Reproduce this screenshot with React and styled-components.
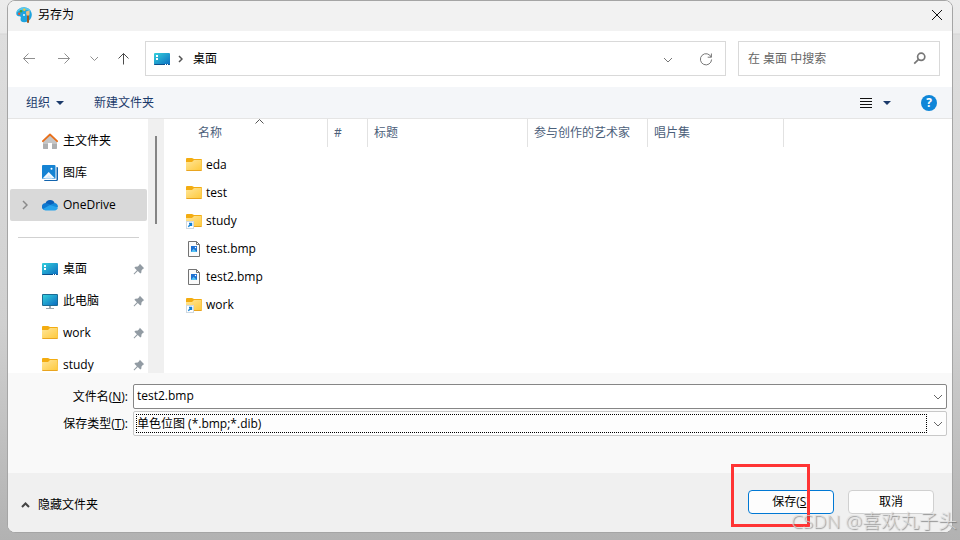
// App.jsx
import { useState } from "react";
import styled, { createGlobalStyle } from "styled-components";

const places = [
  { name: "主文件夹", icon: HomeIcon },
  { name: "图库", icon: GalleryIcon },
  { name: "OneDrive", icon: CloudIcon, expandable: true },
];

const pinned = [
  { name: "桌面", icon: DesktopIcon },
  { name: "此电脑", icon: ComputerIcon },
  { name: "work", icon: FolderIcon },
  { name: "study", icon: FolderIcon },
];

const columns = [
  { name: "名称", width: 164, sorted: true },
  { name: "#", width: 40 },
  { name: "标题", width: 160 },
  { name: "参与创作的艺术家", width: 120 },
  { name: "唱片集", width: 136 },
];

const files = [
  { name: "eda", icon: FolderIcon },
  { name: "test", icon: FolderIcon },
  { name: "study", icon: FolderLinkIcon },
  { name: "test.bmp", icon: BitmapIcon },
  { name: "test2.bmp", icon: BitmapIcon },
  { name: "work", icon: FolderLinkIcon },
];

export default function App() {
  const [fileName, setFileName] = useState("test2.bmp");
  const [place, setPlace] = useState("OneDrive");

  return (
    <Desktop>
      <GlobalStyle />
      <Dialog role="dialog" aria-labelledby="dialog-title">
        <TitleBar>
          <PaintIcon />
          <Title id="dialog-title">另存为</Title>
          <CloseButton aria-label="关闭">
            <Stroke width="12" height="12" $color="#111">
              <path d="M1 1L11 11M11 1L1 11" />
            </Stroke>
          </CloseButton>
        </TitleBar>

        <NavBar>
          <History>
            <IconButton aria-label="后退">
              <Stroke width="14" height="14" $color="#8f8f8f">
                <path d="M13 6.5H1.5M6.5 1.5L1.5 6.5L6.5 11.5" />
              </Stroke>
            </IconButton>
            <IconButton aria-label="前进">
              <Stroke width="14" height="14" $color="#8f8f8f">
                <path d="M2 6.5H13.5M8.5 1.5L13.5 6.5L8.5 11.5" />
              </Stroke>
            </IconButton>
            <IconButton aria-label="最近的位置">
              <Stroke width="8" height="14" $color="#8f8f8f">
                <path d="M0.5 4.5L4.5 8.5L8 5" />
              </Stroke>
            </IconButton>
            <IconButton aria-label="上移">
              <Stroke width="14" height="14" $color="#4c4c4c">
                <path d="M5.5 12.5V1.5M0.5 6.5L5.5 1.5L10.5 6.5" />
              </Stroke>
            </IconButton>
          </History>
          <AddressBar>
            <DesktopIcon />
            <Stroke width="5" height="8" $color="#555" $weight={1.5}>
              <path d="M1 1L4 4L1 7" />
            </Stroke>
            <Crumb>桌面</Crumb>
            <AddressTools>
              <IconButton aria-label="以前的位置">
                <Stroke width="10" height="8" $color="#777">
                  <path d="M1 3L5 7L9 3" />
                </Stroke>
              </IconButton>
              <IconButton aria-label="刷新">
                <Stroke width="14" height="14" $color="#777">
                  <path d="M12.2 5.2A5.6 5.6 0 1 0 12.6 7.5M12.4 1.5V5.2H8.7" />
                </Stroke>
              </IconButton>
            </AddressTools>
          </AddressBar>
          <SearchBox>
            <SearchInput type="search" aria-label="搜索" placeholder="在 桌面 中搜索" />
            <Stroke width="13" height="13" $color="#777" $weight={1.7}>
              <circle cx="8.2" cy="4.8" r="3.6" />
              <path d="M5.6 7.4L1.2 11.6" />
            </Stroke>
          </SearchBox>
        </NavBar>

        <Toolbar>
          <ToolButton>
            组织 <CaretIcon />
          </ToolButton>
          <ToolButton>新建文件夹</ToolButton>
          <ViewTools>
            <ToolButton aria-label="更改视图">
              <Stroke width="12" height="12" $color="#111">
                <path d="M0 1.5H12M0 4.5H12M0 7.5H12M0 10.5H12" />
              </Stroke>
            </ToolButton>
            <ToolButton aria-label="更多选项">
              <CaretIcon />
            </ToolButton>
            <HelpButton aria-label="帮助">?</HelpButton>
          </ViewTools>
        </Toolbar>

        <Browser>
          <Sidebar aria-label="导航窗格">
            {places.map(({ name, icon: Icon, expandable }) => (
              <Place key={name} $active={place === name} onClick={() => setPlace(name)}>
                <Expander>
                  {expandable && (
                    <Stroke width="6" height="10" $color="#8a8a8a" $weight={1.5}>
                      <path d="M1 1L5 5L1 9" />
                    </Stroke>
                  )}
                </Expander>
                <Icon />
                <PlaceName>{name}</PlaceName>
              </Place>
            ))}
            <Divider />
            {pinned.map(({ name, icon: Icon }) => (
              <Place key={name} $active={place === name} onClick={() => setPlace(name)}>
                <Expander />
                <Icon />
                <PlaceName>{name}</PlaceName>
                <PinIcon />
              </Place>
            ))}
          </Sidebar>
          <ScrollTrack>
            <ScrollThumb />
          </ScrollTrack>
          <FileArea>
            <FileTable>
              <colgroup>
                {columns.map((column) => (
                  <Column key={column.name} $width={column.width} />
                ))}
                <col />
              </colgroup>
              <thead>
                <tr>
                  {columns.map((column) => (
                    <HeadCell
                      key={column.name}
                      scope="col"
                      $first={column.sorted}
                      aria-sort={column.sorted ? "ascending" : undefined}
                    >
                      {column.name}
                      {column.sorted && (
                        <SortMark width="9" height="5" $color="#555">
                          <path d="M0.5 4.5L4.5 0.5L8.5 4.5" />
                        </SortMark>
                      )}
                    </HeadCell>
                  ))}
                  <td />
                </tr>
              </thead>
              <FileRows>
                {files.map(({ name, icon: Icon }) => (
                  <tr key={name}>
                    <FileCell colSpan={6}>
                      <FileLabel>
                        <Icon />
                        {name}
                      </FileLabel>
                    </FileCell>
                  </tr>
                ))}
              </FileRows>
            </FileTable>
          </FileArea>
        </Browser>

        <Fields>
          <FieldLabel htmlFor="file-name">
            文件名(<u>N</u>):
          </FieldLabel>
          <Combo $strong>
            <NameInput
              id="file-name"
              value={fileName}
              onChange={(event) => setFileName(event.target.value)}
            />
            <ComboArrow />
          </Combo>
          <FieldLabel htmlFor="file-type">
            保存类型(<u>T</u>):
          </FieldLabel>
          <Combo>
            <TypeSelect id="file-type">
              <option>单色位图 (*.bmp;*.dib)</option>
            </TypeSelect>
            <ComboArrow />
          </Combo>
        </Fields>

        <Footer>
          <FoldButton>
            <Stroke width="9" height="8" $color="#444" $weight={2}>
              <path d="M1 6L4.5 2.5L8 6" />
            </Stroke>
            隐藏文件夹
          </FoldButton>
          <Actions>
            <ActionButton $primary>
              保存(<u>S</u>)
            </ActionButton>
            <ActionButton>取消</ActionButton>
          </Actions>
        </Footer>
      </Dialog>
      <Highlight />
      <Watermark>CSDN @喜欢丸子头</Watermark>
    </Desktop>
  );
}

function ComboArrow() {
  return (
    <ArrowBox>
      <Stroke width="10" height="8" $color="#666">
        <path d="M1 2L5 6L9 2" />
      </Stroke>
    </ArrowBox>
  );
}

function CaretIcon() {
  return (
    <svg width="8" height="4" viewBox="0 0 8 4" aria-hidden="true">
      <path d="M0 0H8L4 4Z" fill="#1b3a6b" />
    </svg>
  );
}

function PaintIcon() {
  return (
    <svg width="16" height="16" viewBox="0 0 16 16" aria-hidden="true">
      <path
        d="M9 0.4C4 0 0.3 3.2 0.3 6.6C0.3 9 2 9.4 3.2 9.2C4.7 9 5.2 10 4.6 11.4C4 13.5 5.5 15.2 8.4 15.2C12.8 15 15.8 12 15.8 7.6C15.8 3.5 12.8 0.7 9 0.4Z"
        fill="#1ea4df"
      />
      <path d="M9 0.4C4 0 0.3 3.2 0.3 6.6C2 3 8 1 15 4.5C13.8 2 11.6 0.6 9 0.4Z" fill="#58c7ec" />
      <circle cx="3.2" cy="6.8" r="1.2" fill="#e8542f" />
      <circle cx="5" cy="4.2" r="1.2" fill="#3f9c3a" />
      <circle cx="8.3" cy="2.8" r="1.2" fill="#f6c62d" />
      <circle cx="8" cy="8" r="1" fill="#e9f7fc" />
      <path d="M10 4.5L13.5 3.6L13.6 7L12.9 9H11L10.2 7Z" fill="#e9bd83" />
      <path d="M11 8.5H13V15.5L12 16L11 15.5Z" fill="#9c5b24" />
    </svg>
  );
}

function HomeIcon() {
  return (
    <svg width="16" height="16" viewBox="0 0 16 16" aria-hidden="true">
      <path d="M1 8L8 1.8L15 8V15Q15 16 14 16H10V10H6V16H2Q1 16 1 15Z" fill="#c4c5c6" />
      <path d="M1 11V15Q1 16 2 16H6V11ZM10 11V16H14Q15 16 15 15V11Z" fill="#adafb1" />
      <path
        d="M0.9 8.2L8 1.5L15.1 8.2"
        fill="none"
        stroke="#e8701c"
        strokeWidth="1.8"
        strokeLinecap="round"
        strokeLinejoin="round"
      />
    </svg>
  );
}

function GalleryIcon() {
  return (
    <svg width="16" height="16" viewBox="0 0 16 16" aria-hidden="true">
      <path d="M14.5 2H15Q16 2 16 3V14.5Q16 16 14.5 16H3Q2 16 2 15H14.5Z" fill="#1264ae" />
      <rect width="13.5" height="14" rx="1" fill="#1583d3" />
      <path d="M0.5 13.5L6.7 7L13 13.5Z" fill="#f4faff" />
      <path d="M3 13.5L6.7 10L10.5 13.5Z" fill="#dcedfa" />
      <circle cx="9.5" cy="3.8" r="1" fill="#fff" />
    </svg>
  );
}

function CloudIcon() {
  return (
    <svg width="16" height="16" viewBox="0 0 16 16" aria-hidden="true">
      <path d="M3.4 6.6A4.9 4.9 0 0 1 12.7 6.2L9 10L1 12A3.2 3.2 0 0 1 3.4 6.6Z" fill="#0a5fb8" />
      <path d="M3.4 6.3Q6 5.8 8.4 7.8L4 12.8H3.2A3.2 3.2 0 0 1 3.4 6.3Z" fill="#0f79d0" />
      <path d="M8 8L12.4 6A3.6 3.6 0 0 1 15.9 10L11 11Z" fill="#1489da" />
      <path d="M1 12L8 8L15.9 10.6Q15.5 13.4 12.7 13.4H3.5Q1.8 13.4 1 12Z" fill="#27a4ec" />
    </svg>
  );
}

function DesktopIcon() {
  return (
    <svg width="16" height="16" viewBox="0 0 16 16" aria-hidden="true">
      <defs>
        <linearGradient id="desktop-fill" x1="0" y1="0" x2="1" y2="1">
          <stop offset="0" stopColor="#34d0dc" />
          <stop offset="1" stopColor="#0c6cc0" />
        </linearGradient>
      </defs>
      <rect y="2" width="16" height="12" rx="1" fill="url(#desktop-fill)" />
      <path d="M0 13H16Q16 14 15 14H1Q0 14 0 13Z" fill="#0b4f8c" />
      <path d="M2 4H4V6H2ZM2 7H4V9H2ZM11 13H12V14H11ZM13 13H14V14H13Z" fill="#fff" />
    </svg>
  );
}

function ComputerIcon() {
  return (
    <svg width="16" height="16" viewBox="0 0 16 16" aria-hidden="true">
      <rect y="1" width="16" height="12" rx="1" fill="#1b6c94" />
      <rect x="1" y="2" width="14" height="10" fill="url(#desktop-fill)" />
      <path d="M7 13H9V15H12V16H4V15H7Z" fill="#9aa5ad" />
    </svg>
  );
}

function FolderShape() {
  return (
    <>
      <defs>
        <linearGradient id="folder-fill" x1="0" y1="0" x2="1" y2="1">
          <stop offset="0" stopColor="#ffe69a" />
          <stop offset="1" stopColor="#fec93c" />
        </linearGradient>
      </defs>
      <path d="M0 2Q0 1 1 1H6L8 2H15Q16 2 16 3V8H0Z" fill="#f3ac11" />
      <path d="M0 6H6L8 4H15Q16 4 16 5V13Q16 14 15 14H1Q0 14 0 13Z" fill="#e9a520" />
      <path d="M0 5H6L8 3H15.5L16 13H0Z" fill="url(#folder-fill)" />
    </>
  );
}

function FolderIcon() {
  return (
    <svg width="16" height="16" viewBox="0 0 16 16" aria-hidden="true">
      <FolderShape />
    </svg>
  );
}

function FolderLinkIcon() {
  return (
    <svg width="16" height="16" viewBox="0 0 16 16" aria-hidden="true">
      <FolderShape />
      <rect x="0.5" y="8.5" width="7" height="7" fill="#fff" stroke="#cfd8e0" />
      <path d="M2.3 13.7L5.3 10.7M3 10.5H5.5V13" fill="none" stroke="#1180d6" strokeWidth="1.4" />
    </svg>
  );
}

function BitmapIcon() {
  return (
    <svg width="16" height="16" viewBox="0 0 16 16" aria-hidden="true">
      <path d="M2.5 0.5H10.5L13.5 3.5V15.5H2.5Z" fill="#fafafa" stroke="#737373" />
      <path d="M10.5 0.5V3.5H13.5" fill="none" stroke="#737373" />
      <rect x="5" y="5" width="6" height="6" fill="#1d6fd0" />
      <path d="M5 11L7.5 7.8L11 11Z" fill="#54c1f2" />
      <circle cx="9.5" cy="6.5" r="0.7" fill="#fff" />
    </svg>
  );
}

function PinIcon() {
  return (
    <svg width="12" height="12" viewBox="0 0 12 12" aria-hidden="true">
      <path
        d="M6.8 0.8L11.2 5.2L10 5.8L8.5 7.4L8.3 9.8L7.3 10.6L4.8 8.1L1.2 11.4L0.6 10.8L3.9 7.2L1.4 4.7L2.3 3.8L4.8 3.6L6.3 2Z"
        fill="#929ba3"
      />
    </svg>
  );
}

const GlobalStyle = createGlobalStyle`
  * {
    box-sizing: border-box;
  }

  body {
    margin: 0;
  }

  body, button, input, select {
    font-family: "Open Sans", "Noto Sans CJK SC", sans-serif;
    font-size: 12px;
    line-height: 16px;
    color: #000;
  }

  button {
    padding: 0;
    border: 0;
    background: none;
  }

  svg {
    display: block;
    flex: none;
  }
`;

const Desktop = styled.main`
  position: relative;
  display: flex;
  height: 100vh;
  padding: 0 7px 7px;
  overflow: hidden;
  background: linear-gradient(
    #ececec 0,
    #e8e8e8 33px,
    #d6d6d6 34px,
    #dedede 35px,
    #d0d0d0 60%,
    #b2b2b2
  );
`;

const Dialog = styled.div`
  display: flex;
  flex: 1;
  flex-direction: column;
  min-width: 0;
  border: 1px solid #a5a5a5;
  border-radius: 8px;
  overflow: hidden;
  background: #fff;
`;

const TitleBar = styled.header`
  display: flex;
  align-items: center;
  gap: 6px;
  height: 30px;
  flex: none;
  padding: 0 9px 2px 8px;
  background: #f2f2f2;
`;

const Title = styled.h1`
  margin: 0;
  font-size: 12px;
  font-weight: 400;
`;

const CloseButton = styled.button`
  margin-left: auto;
`;

const Stroke = styled.svg`
  fill: none;
  stroke: ${({ $color }) => $color};
  stroke-width: ${({ $weight }) => $weight || 1};
`;

const NavBar = styled.nav`
  display: flex;
  align-items: stretch;
  height: 56px;
  flex: none;
  padding: 10px 12px 11px 14px;
`;

const History = styled.div`
  display: flex;
  align-items: center;
  gap: 20px;
  width: 123px;
  flex: none;
`;

const IconButton = styled.button`
  display: flex;
  align-items: center;
`;

const AddressBar = styled.div`
  display: flex;
  flex: 1;
  align-items: center;
  gap: 8px;
  margin-right: 12px;
  padding: 0 12px 0 8px;
  border: 1px solid #d9d9d9;
`;

const Crumb = styled.button`
  margin-left: 2px;
`;

const AddressTools = styled.div`
  display: flex;
  gap: 26px;
  margin-left: auto;
`;

const SearchBox = styled.div`
  display: flex;
  align-items: center;
  width: 202px;
  padding: 0 13px 0 9px;
  border: 1px solid #d9d9d9;
`;

const SearchInput = styled.input`
  flex: 1;
  min-width: 0;
  padding: 0;
  border: 0;
  outline: 0;
  background: none;

  &::placeholder {
    color: #666;
  }
`;

const Toolbar = styled.div`
  display: flex;
  align-items: center;
  gap: 30px;
  height: 32px;
  flex: none;
  padding: 0 15px 0 18px;
  border-bottom: 1px solid #e5e5e5;
  background: #f4f6f9;
`;

const ToolButton = styled.button`
  display: flex;
  align-items: center;
  gap: 6px;
  color: #1b3a6b;
`;

const ViewTools = styled.div`
  display: flex;
  align-items: center;
  gap: 11px;
  margin-left: auto;
`;

const HelpButton = styled.button`
  width: 16px;
  height: 16px;
  margin-left: 19px;
  border-radius: 50%;
  background: #0f86d8;
  color: #fff;
  font-weight: 700;
`;

const Browser = styled.div`
  display: flex;
  flex: 1;
  min-height: 0;
`;

const Sidebar = styled.nav`
  width: 140px;
  flex: none;
  padding: 6px 1px 0 2px;
  overflow: hidden;
`;

const Place = styled.button`
  display: flex;
  align-items: center;
  width: 100%;
  height: 32px;
  padding-right: 2px;
  border-radius: 2px;
  background: ${({ $active }) => ($active ? "#d9d9d9" : "transparent")};
`;

const Expander = styled.span`
  width: 32px;
  padding-left: 12px;
`;

const PlaceName = styled.span`
  flex: 1;
  margin-left: 5px;
  text-align: left;
`;

const Divider = styled.hr`
  height: 1px;
  margin: 16px 8px 15px;
  border: 0;
  background: #d1d1d1;
`;

const ScrollTrack = styled.div`
  width: 16px;
  flex: none;
  padding: 17px 7px;
  background: #f0f0f0;
`;

const ScrollThumb = styled.div`
  width: 2px;
  height: 88px;
  background: #858585;
`;

const FileArea = styled.div`
  flex: 1;
  min-width: 0;
  overflow: hidden;
`;

const FileTable = styled.table`
  width: 100%;
  border-collapse: separate;
  border-spacing: 0;
  table-layout: fixed;
`;

const Column = styled.col`
  width: ${({ $width }) => $width}px;
`;

const HeadCell = styled.th`
  position: relative;
  height: 28px;
  padding: 0 0 0 ${({ $first }) => ($first ? "34px" : "6px")};
  border-right: 1px solid #e2e2e2;
  color: #4c607a;
  font-weight: 400;
  text-align: left;
  white-space: nowrap;
`;

const SortMark = styled(Stroke)`
  position: absolute;
  top: 0;
  left: 91px;
`;

const FileRows = styled.tbody`
  &::before {
    content: "";
    display: block;
    height: 4px;
  }
`;

const FileCell = styled.td`
  height: 28px;
  padding: 0 0 0 22px;
`;

const FileLabel = styled.span`
  display: flex;
  align-items: center;
  gap: 4px;
`;

const Fields = styled.form`
  display: grid;
  grid-template-columns: 120px 1fr;
  gap: 2px 5px;
  flex: none;
  padding: 11px 5px 37px 0;
  background: #f9f9f9;
`;

const FieldLabel = styled.label`
  align-self: center;
  text-align: right;
`;

const Combo = styled.div`
  display: flex;
  height: 25px;
  border: 1px solid ${({ $strong }) => ($strong ? "#868686" : "#c8c8c8")};
  border-radius: 2px;
  background: ${({ $strong }) => ($strong ? "#fff" : "#fdfdfd")};
`;

const NameInput = styled.input`
  flex: 1;
  min-width: 0;
  padding: 0 3px 1px;
  border: 0;
  outline: 0;
  background: none;
`;

const TypeSelect = styled.select`
  flex: 1;
  min-width: 0;
  margin: 2px 0 2px 2px;
  padding: 0;
  border: 1px dotted #000;
  outline: 0;
  background: none;
  appearance: none;
`;

const ArrowBox = styled.span`
  display: flex;
  align-items: center;
  justify-content: flex-end;
  width: 19px;
  padding-right: 3px;
`;

const Footer = styled.footer`
  display: flex;
  align-items: center;
  justify-content: space-between;
  flex: none;
  padding: 17px 18px 18px 13px;
  background: #f0f0f0;
`;

const FoldButton = styled.button`
  display: flex;
  align-items: center;
  gap: 8px;
  padding-top: 6px;
`;

const Actions = styled.div`
  display: flex;
  gap: 14px;
`;

const ActionButton = styled.button`
  width: 86px;
  height: 24px;
  border: 1px solid ${({ $primary }) => ($primary ? "#0078d4" : "#d0d0d0")};
  border-radius: 4px;
  background: #fdfdfd;
`;

const Highlight = styled.div`
  position: absolute;
  right: 150px;
  bottom: 13px;
  width: 79px;
  height: 63px;
  border: 3px solid #ff3434;
  pointer-events: none;
`;

const Watermark = styled.p`
  position: absolute;
  right: 3px;
  bottom: 7px;
  margin: 0;
  color: rgba(225, 225, 225, 0.8);
  font-size: 19px;
  font-weight: 300;
  line-height: 24px;
  text-shadow: 1px 1px 1px rgba(100, 100, 100, 0.7);
  pointer-events: none;
`;
